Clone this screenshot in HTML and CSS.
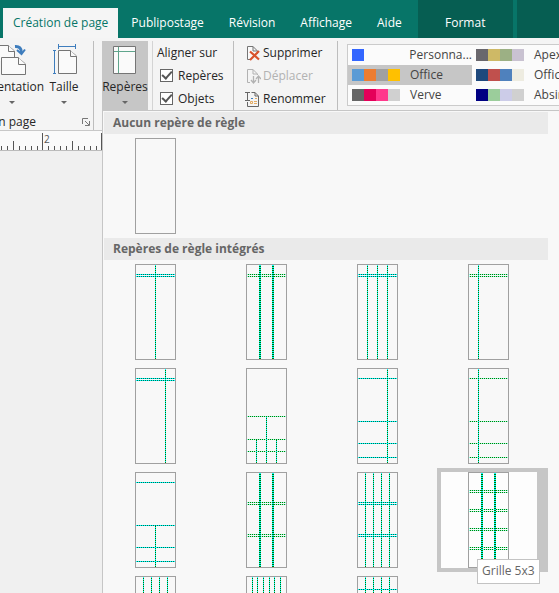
FILE: index.html
```html
<!DOCTYPE html>
<html lang="fr">
<head>
<meta charset="utf-8">
<title>Création de page</title>
<link rel="stylesheet" href="styles.css">
</head>
<body>
<svg class="defs" aria-hidden="true">
  <defs>
    <pattern id="dots-v" width="2" height="2" patternUnits="userSpaceOnUse"><rect width="2" height="2" fill="#00ffff"/><rect width="2" height="1" fill="#007000"/></pattern>
    <pattern id="dots-h" width="2" height="2" patternUnits="userSpaceOnUse"><rect width="2" height="2" fill="#00ffff"/><rect width="1" height="2" fill="#007050"/></pattern>
    <pattern id="dots-g" width="2" height="2" patternUnits="userSpaceOnUse"><rect width="2" height="2" fill="#90ffe0"/><rect width="1" height="2" fill="#008000"/></pattern>
  </defs>
</svg>

<nav class="tabs">
  <a class="tab active" href="#">Création de page</a>
  <a class="tab" href="#">Publipostage</a>
  <a class="tab" href="#">Révision</a>
  <a class="tab" href="#">Affichage</a>
  <a class="tab help" href="#">Aide</a>
  <a class="tab context" href="#">Format</a>
  <span class="context-rest"></span>
</nav>

<div class="ribbon">
  <section class="group setup">
    <div class="row">
      <button class="big orient">
        <svg width="46" height="34" viewBox="9 0 46 34"><g fill="#fafafa" stroke="#757575"><path d="M12.500 20V4.500H28L34.500 10V20"/><path d="M28.500 4.500V10.500H34.500" /><path d="M21.500 16.500H38L45.500 23V33.500H21.500z"/><path d="M38.500 16.500V23.500H45.500"/></g><path d="M35 5.500Q41.500 5 41.500 12" fill="none" stroke="#3e7dbd" stroke-width="3"/><path d="M37 9L41.500 13L45 8.500" fill="none" stroke="#3e7dbd" stroke-width="2"/></svg>
        <span>Orientation</span><i class="arrow"></i>
      </button>
      <button class="big size">
        <svg width="26" height="34" viewBox="-2 -1 26 34"><g fill="none" stroke="#3e7dbd"><path d="M5 4.500H23M5.500 2V7M22.500 2V7M1.500 8V32M0 8.500H3M0 31.500H3"/></g><g fill="#fafafa" stroke="#757575"><path d="M5.500 8.500H17L23.500 14V31.500H5.500z"/><path d="M17.500 8.500V14.500H23.500"/></g></svg>
        <span>Taille</span><i class="arrow"></i>
      </button>
    </div>
    <div class="caption"><span>Mise en page</span>
      <button class="launcher" aria-label="Mise en page"><svg width="8" height="8" viewBox="0 0 8 8" fill="none" stroke="#777"><path d="M.5 6V.5H6M3 3L7 7M7.500 3V7.500H3"/></svg></button>
    </div>
  </section>

  <section class="group layout">
    <div class="row">
      <button class="big guides">
        <svg width="24" height="34" viewBox="0 0 24 34"><path d="M.5 5.500H22.500V32.500H.5z" fill="#fafafa" stroke="#757575"/><path d="M5.500 6V32M1 10.500H22" stroke="#5fa58c" fill="none"/></svg>
        <span>Repères</span><i class="arrow"></i>
      </button>
      <div class="align">
        <span class="line">Aligner sur</span>
        <label class="line"><input type="checkbox" checked>Repères</label>
        <label class="line"><input type="checkbox" checked>Objets</label>
      </div>
    </div>
  </section>

  <section class="group pages">
    <button class="line"><svg width="16" height="16" viewBox="0 0 16 16"><path d="M2.500 14.500V1.500H8L12.500 6V9M8 1.500V6H12" fill="#fafafa" stroke="#757575"/><path d="M2.500 14.500H5" stroke="#757575"/><path d="M5 6.500L14 14.500M14 6L5 15" stroke="#d9532c" stroke-width="2.200"/></svg>Supprimer</button>
    <button class="line" disabled><svg width="16" height="16" viewBox="0 0 16 16" fill="none" stroke="#b2b2b2"><path d="M2.500 14.500V1.500H8L12.500 6V7M8 1.500V6H12M2.500 14.500H5"/><path d="M8.500 8V15M6 12L8.500 15L11 12M13.500 15V8M11 11L13.500 8L16 11" stroke-width="1.300"/></svg>Déplacer</button>
    <button class="line"><svg width="16" height="16" viewBox="0 0 16 16" fill="none" stroke="#666"><path d="M6.500 1.500H10L13.500 5V15.500H2.500V11M10 1.500V5H13"/><path d="M0 1.500H5M0 9.500H5M2.500 2V9"/><path d="M6 7.500H8" stroke="#3e7dbd"/><path d="M5.500 10.500H7.500V12.500H5.500zM9 10.500H12M9 12.500H12M10 7.500H12" stroke="#e5ab62"/></svg>Renommer</button>
  </section>

  <section class="group schemes">
    <div class="gallery">
      <button class="scheme"><span class="swatches"><i class="c-blue"></i></span>Personna...</button>
      <button class="scheme"><span class="swatches"><i class="c-slate"></i><i class="c-sand"></i><i class="c-sage"></i><i class="c-lilac"></i></span>Apex</button>
      <button class="scheme selected"><span class="swatches"><i class="c-sky"></i><i class="c-orange"></i><i class="c-gray"></i><i class="c-gold"></i></span>Office</button>
      <button class="scheme"><span class="swatches"><i class="c-navy"></i><i class="c-brick"></i><i class="c-steel"></i><i class="c-cream"></i></span>Office</button>
      <button class="scheme"><span class="swatches"><i class="c-coal"></i><i class="c-crimson"></i><i class="c-pink"></i><i class="c-silver"></i></span>Verve</button>
      <button class="scheme"><span class="swatches"><i class="c-deep"></i><i class="c-mint"></i><i class="c-lavender"></i><i class="c-silver"></i></span>Absinthe</button>
    </div>
  </section>
</div>

<div class="ruler">
  <svg width="103" height="18" viewBox="0 0 103 18" fill="none" stroke="#555"><path d="M1.500 14V18M7.500 14V18M13.500 9V18M19.500 14V18M25.500 14V18M31.500 14V18M37.500 14V18M42.500 1V18M48.500 14V18M54.500 14V18M60.500 14V18M66.500 14V18M72.500 9V18M78.500 14V18M84.500 14V18M90.500 14V18M96.500 14V18M101.500 1V18"/><text x="44" y="11">2</text></svg>
</div>

<div class="menu">
  <h2>Aucun repère de règle</h2>
  <div class="tiles">
    <button class="tile" aria-label="Aucun"><svg viewBox="0 0 41 96"></svg></button>
  </div>
  <h2>Repères de règle intégrés</h2>
  <div class="tiles">
    <button class="tile"><svg viewBox="0 0 41 96"><path class="h" d="M1 10.500H40M1 12.500H40"/><path class="v" d="M20.500 1V95"/></svg></button>
    <button class="tile"><svg viewBox="0 0 41 96"><path class="g" d="M1 10.500H40M1 12.500H40"/><path class="v wide" d="M14 1V95M27 1V95"/></svg></button>
    <button class="tile"><svg viewBox="0 0 41 96"><path class="h" d="M1 10.500H40M1 12.500H40"/><path class="v" d="M10.500 1V95M20.500 1V95M30.500 1V95"/></svg></button>
    <button class="tile"><svg viewBox="0 0 41 96"><path class="g" d="M1 10.500H40M1 12.500H40"/><path class="v" d="M10.500 1V95"/></svg></button>

    <button class="tile"><svg viewBox="0 0 41 96"><path class="h" d="M1 10.500H40M1 12.500H40"/><path class="v" d="M30.500 1V95"/></svg></button>
    <button class="tile"><svg viewBox="0 0 41 96"><path class="g" d="M1 48.500H40M1 71.500H40M1 83.500H40"/><path class="v" d="M20.500 49V95M10.500 72V95M30.500 72V95"/></svg></button>
    <button class="tile"><svg viewBox="0 0 41 96"><path class="h" d="M1 10.500H40M1 53.500H40M1 75.500H40M1 89.500H40"/><path class="v" d="M30.500 1V95"/></svg></button>
    <button class="tile"><svg viewBox="0 0 41 96"><path class="g" d="M1 10.500H40M1 53.500H40M1 75.500H40M1 89.500H40"/><path class="v" d="M10.500 1V95"/></svg></button>

    <button class="tile"><svg viewBox="0 0 41 96"><path class="h" d="M1 10.500H40M1 53.500H40M1 75.500H40M1 89.500H40"/><path class="v" d="M20.500 54V95"/></svg></button>
    <button class="tile"><svg viewBox="0 0 41 96"><path class="g" d="M1 30.500H40M1 32.500H40M1 62.500H40M1 64.500H40"/><path class="v wide" d="M14 1V95M27 1V95"/></svg></button>
    <button class="tile"><svg viewBox="0 0 41 96"><path class="h" d="M1 30.500H40M1 32.500H40M1 62.500H40M1 64.500H40"/><path class="v" d="M8.500 1V95M16.500 1V95M24.500 1V95M32.500 1V95"/></svg></button>
    <button class="tile hover" aria-label="Grille 5x3"><svg viewBox="0 0 41 96"><path class="g" d="M1 18.500H40M1 20.500H40M1 37.500H40M1 39.500H40M1 56.500H40M1 58.500H40M1 75.500H40M1 77.500H40"/><path class="v wide" d="M14 1V95M27 1V95"/></svg><span class="tooltip">Grille 5x3</span></button>

    <button class="tile"><svg viewBox="0 0 41 96"><path class="v" d="M8.500 1V95M16.500 1V95M24.500 1V95M32.500 1V95"/></svg></button>
    <button class="tile"><svg viewBox="0 0 41 96"><path class="v" d="M6.500 1V95M11.500 1V95M17.500 1V95M23.500 1V95M28.500 1V95M34.500 1V95"/></svg></button>
    <button class="tile"><svg viewBox="0 0 41 96"><path class="h" d="M1 13.500H40"/><path class="v" d="M8.500 1V95M16.500 1V95M24.500 1V95M32.500 1V95"/></svg></button>
  </div>
</div>
</body>
</html>
```
FILE: styles.css
```css
* { box-sizing: border-box; }

html, body { height: 100%; }

body {
  margin: 0;
  overflow: hidden;
  position: relative;
  background: #f0f0f0;
  color: #262626;
  font: 12px/16px "Open Sans", "Noto Sans", sans-serif;
}

button {
  margin: 0;
  padding: 0;
  border: 0;
  background: none;
  color: inherit;
  font: inherit;
}

.defs { position: absolute; width: 0; height: 0; }

/* Tab strip */
.tabs {
  display: flex;
  gap: 1px;
  height: 38px;
  padding: 0 0 0 3px;
  background: #077568;
}

.tab {
  flex: none;
  padding: 15px 12px 0;
  color: #fff;
  text-decoration: none;
  white-space: nowrap;
}

.tab.active {
  margin-top: 8px;
  padding: 7px 10px 0;
  background: #f5f5f5;
  color: #077568;
}

.tab.help { margin-right: 3px; }

.tab.context {
  width: 95px;
  padding: 15px 0 0;
  background: #065e52;
  text-align: center;
}

.context-rest { flex: 1; margin-left: 3px; background: #065e52; }

/* Ribbon */
.ribbon {
  display: flex;
  height: 93px;
  padding-top: 3px;
  overflow: hidden;
  border-bottom: 1px solid #c8c8c8;
  background: #f4f4f4;
  white-space: nowrap;
}

.group { flex: none; position: relative; }

.row { display: flex; }

.big {
  display: flex;
  flex-direction: column;
  align-items: center;
  height: 70px;
}

.big svg { display: block; margin-bottom: 4px; }

.arrow {
  margin-top: 6px;
  border: 3px solid transparent;
  border-top-color: #666;
  border-bottom: 0;
}

.setup {
  width: 114px;
  margin: 0 8px 0 -20px;
  border-right: 1px solid #bdbdbd;
}

.orient { width: 64px; }
.size { width: 40px; }

.caption {
  display: flex;
  align-items: center;
  justify-content: space-between;
  padding: 3px 3px 0 0;
}

.caption span { display: flex; justify-content: flex-end; width: 56px; }

.launcher { display: flex; }

.guides { width: 46px; background: #c6c6c6; }

.layout { width: 132px; border-right: 1px solid #bdbdbd; }

.align {
  margin: 0 0 0 4px;
  padding-left: 4px;
  border-left: 1px solid #d4d4d4;
}

.line {
  display: flex;
  align-items: center;
  height: 23px;
}

.align input {
  appearance: none;
  width: 13px;
  height: 13px;
  margin: 0 5px 0 3px;
  border: 1px solid #666;
  background: #fff;
  display: grid;
  place-items: center;
}

.align input:checked::before {
  content: "";
  width: 8px;
  height: 4px;
  border: solid #555;
  border-width: 0 0 2px 2px;
  transform: rotate(-48deg);
  margin-bottom: 3px;
}

.pages { width: 104px; padding-left: 11px; border-right: 1px solid #bdbdbd; }
.pages svg { margin-right: 2px; }
.pages button:disabled { color: #b2b2b2; }

.schemes { padding: 3px 0 0 9px; }

.gallery {
  display: grid;
  grid-template-columns: 124px 124px;
  border: 1px solid #cbcbcb;
  background: #fbfbfb;
  color: #444;
}

.scheme { display: flex; align-items: center; height: 20px; padding-left: 4px; }
.scheme.selected { background: #c6c6c6; }
.swatches { display: flex; width: 58px; }
.swatches i { width: 12px; height: 12px; }

.c-blue { background: #3366ff; }
.c-slate { background: #69676d; }
.c-sand { background: #ceb966; }
.c-sage { background: #9cb084; }
.c-lilac { background: #c9c2d1; }
.c-sky { background: #5b9bd5; }
.c-orange { background: #ed7d31; }
.c-gray { background: #a0a0a0; }
.c-gold { background: #ffc000; }
.c-navy { background: #1f497d; }
.c-brick { background: #c0504d; }
.c-steel { background: #4f81bd; }
.c-cream { background: #eeece1; }
.c-coal { background: #666; }
.c-crimson { background: #e40059; }
.c-pink { background: #ff388c; }
.c-silver { background: #d0d0d0; }
.c-deep { background: #000082; }
.c-mint { background: #9bcd9b; }
.c-lavender { background: #cccce8; }

/* Ruler */
.ruler {
  height: 20px;
  padding-top: 1px;
  border-bottom: 1px solid #bbb;
  background: #fafafa;
}

.ruler svg { display: block; }
.ruler text { fill: #555; stroke: none; font-size: 10px; }

/* Guides menu opened over the page */
.menu {
  position: absolute;
  top: 110px;
  right: 0;
  bottom: 0;
  left: 102px;
  overflow: hidden;
  padding: 1px 11px 0 1px;
  border: solid #c6c6c6;
  border-width: 1px 0 0 1px;
  background: #f8f8f8;
}

.menu h2 {
  height: 22px;
  margin: 0;
  padding-left: 9px;
  background: #eaeaea;
  color: #666;
  font-size: 12px;
  font-weight: 700;
  line-height: 22px;
}

.tiles { display: grid; grid-template-columns: repeat(4, 111px); }

.tile {
  position: relative;
  display: flex;
  height: 104px;
  padding: 4px 0 0 31px;
}

.tile svg {
  width: 41px;
  height: 96px;
  outline: 1px solid #a0a0a0;
  outline-offset: -1px;
}

.tile.hover {
  padding: 0 0 0 27px;
  border: solid #c6c6c6;
  border-width: 4px 11px 4px 4px;
  background: #fdfdfd;
}

.tooltip {
  position: absolute;
  top: 87px;
  left: 36px;
  padding: 3px 4px 4px;
  border: 1px solid #c3c3c3;
  background: #fff;
  color: #666;
  white-space: nowrap;
}

.h, .v, .g { fill: none; shape-rendering: crispEdges; }
.h { stroke: url(#dots-h); }
.g { stroke: url(#dots-g); }
.v { stroke: url(#dots-v); }
.wide { stroke-width: 2px; }
```
